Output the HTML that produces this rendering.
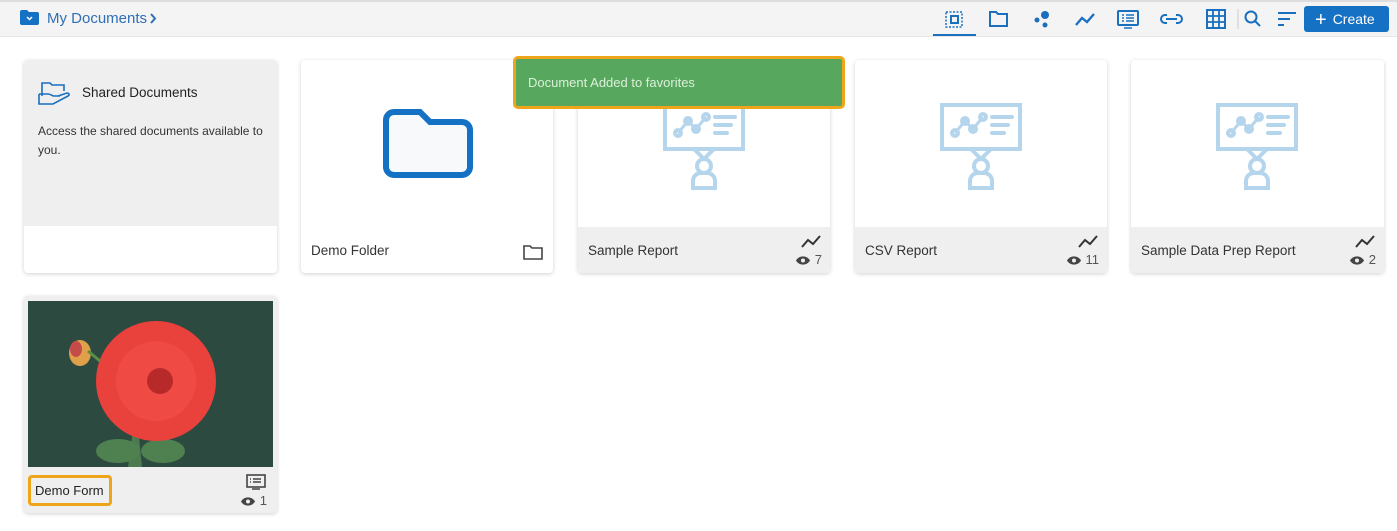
<!DOCTYPE html>
<html><head><meta charset="utf-8"><style>
*{margin:0;padding:0;box-sizing:border-box}
body{width:1397px;height:531px;background:#fff;font-family:"Liberation Sans",sans-serif;position:relative;overflow:hidden;color:#333}
.hdr{position:absolute;left:0;top:0;width:1397px;height:37px;background:#f4f4f4;border-top:2px solid #ddd;border-bottom:1px solid #e6e6e6}
.abs{position:absolute}
.card{position:absolute;background:#fff;border-radius:4px;box-shadow:0 1px 4px rgba(0,0,0,.18);overflow:hidden}
.foot{position:absolute;left:0;right:0;bottom:0;height:46px;background:#efefef}
.title{position:absolute;left:10px;top:16px;font-size:13.5px;color:#333;white-space:nowrap}
.meta{position:absolute;right:8px;top:8px;text-align:right;font-size:13px;color:#555;white-space:nowrap}
.eye{vertical-align:-2px}
</style></head><body>
<div class="hdr"></div>
<svg class="abs" style="left:20px;top:10px" width="19" height="15" viewBox="0 0 19 15"><path d="M0 2a2 2 0 0 1 2-2h5l2 2h8a2 2 0 0 1 2 2v9a2 2 0 0 1-2 2H2a2 2 0 0 1-2-2z" fill="#1571c4"/><path d="M7 7l2.5 2.5L12 7" stroke="#fff" stroke-width="1.5" fill="none"/></svg>
<div class="abs" style="left:47px;top:10px;font-size:15px;color:#2e6fb7">My Documents</div>
<svg class="abs" style="left:149px;top:13px" width="8" height="11"><path d="M2 1l4 4.5L2 10" stroke="#2e6fb7" stroke-width="2" fill="none"/></svg>
<svg class="abs" style="left:933px;top:0" width="380" height="37" viewBox="933 0 380 37" fill="none" stroke="#1a6fbf" stroke-width="2">
<rect x="946" y="12" width="16" height="15" stroke-dasharray="2 1.5" stroke-width="1.5"/><rect x="951" y="16" width="7" height="7" stroke-width="2"/>
<line x1="933" y1="35" x2="976" y2="35" stroke="#1a6fbf" stroke-width="2"/>
<path d="M990 12h6l2 2h9v12h-17z"/>
<circle cx="1045" cy="15" r="4" fill="#1a6fbf" stroke="none"/><circle cx="1037" cy="20" r="2.5" fill="#1a6fbf" stroke="none"/><circle cx="1045" cy="25" r="2.5" fill="#1a6fbf" stroke="none"/>
<path d="M1076 25l6-7 5 4 7-8" stroke-width="2.3"/>
<rect x="1118" y="11" width="20" height="14" rx="1"/><path d="M1122 15h2M1126 15h8M1122 18h2M1126 18h8M1122 21h2M1126 21h8M1124 28h8" stroke-width="1.6"/>
<path d="M1167 15h-2a4 4 0 0 0 0 8h2M1176 15h2a4 4 0 0 1 0 8h-2M1166 19h11"/>
<rect x="1207" y="10" width="18" height="18" stroke-width="2"/><path d="M1213 10v18M1219 10v18M1207 16h18M1207 22h18" stroke-width="1.8"/>
<line x1="1238" y1="9" x2="1238" y2="29" stroke="#ccc" stroke-width="1"/>
<circle cx="1251" cy="17" r="5.5"/><path d="M1255 21l5 5"/>
<path d="M1278 13h18M1278 19h12M1278 25h6"/>
</svg>
<div class="abs" style="left:1304px;top:6px;width:85px;height:26px;background:#1571c4;border-radius:3px;color:#fff;font-size:14px;line-height:26px;padding-left:11px"><span style="font-size:20px;vertical-align:-2px;margin-right:6px">+</span>Create</div>

<div class="card" style="left:24px;top:60px;width:253px;height:213px">
<div style="position:absolute;left:0;top:0;right:0;height:166px;background:#efefef"></div>
<svg class="abs" style="left:14px;top:20px" width="36" height="26" viewBox="0 0 36 26" fill="none" stroke="#1a6fbf" stroke-width="1.6"><path d="M4 16V3h8l2 2h12v6"/><path d="M1 14h9c3 0 4 2 6 2h6M1 14v10h14l15-8c2-1 1-3-1-3l-9 3"/></svg>
<div class="abs" style="left:58px;top:25px;font-size:13.5px;color:#222">Shared Documents</div>
<div class="abs" style="left:14px;top:62px;font-size:12px;line-height:19px;color:#333;width:230px">Access the shared documents available to you.</div>
</div>
<div class="card" style="left:301px;top:60px;width:252px;height:213px">
<svg class="abs" style="left:81px;top:48px" width="92" height="71" viewBox="0 0 92 71"><path d="M4 12a8 8 0 0 1 8-8h26l10 10h32a8 8 0 0 1 8 8v37a8 8 0 0 1-8 8H12a8 8 0 0 1-8-8z" fill="#f7f9fb" stroke="#1571c4" stroke-width="6"/></svg>
<div class="title" style="top:183px">Demo Folder</div>
<svg class="abs" style="left:222px;top:184px" width="20" height="16"><path d="M1 2h6l2 2h10v11H1z" fill="none" stroke="#444" stroke-width="1.6"/></svg>
</div>

<div class="card" style="left:578px;top:60px;width:252px;height:213px"><svg class="abs" style="left:85px;top:43px" width="84" height="88" viewBox="0 0 84 88" fill="none" stroke="#b5d5ed" stroke-width="4"><rect x="2" y="2" width="78" height="44"/><path d="M31 46l10 10M51 46l-10 10"/><circle cx="41" cy="63" r="7"/><path d="M30 85V78a8 8 0 0 1 8-8h6a8 8 0 0 1 8 8v7z"/><path d="M15 30l10-12 8 8 10-12" stroke-width="3"/><circle cx="15" cy="30" r="3"/><circle cx="25" cy="18" r="3"/><circle cx="33" cy="26" r="3"/><circle cx="43" cy="14" r="3"/><path d="M52 14h20M52 22h16M52 30h12" stroke-linecap="round"/></svg>
<div class="foot"><div class="title">Sample Report</div><div class="meta"><svg width="22" height="14"><path d="M2 12l6-7 5 4 7-8" stroke="#333" stroke-width="2" fill="none"/></svg><br><svg class="eye" width="16" height="11"><path d="M1 5.5C4 0 12 0 15 5.5 12 11 4 11 1 5.5z" fill="#444"/><circle cx="8" cy="5.5" r="2" fill="#efefef"/></svg> 7</div></div></div>
<div class="card" style="left:855px;top:60px;width:252px;height:213px"><svg class="abs" style="left:85px;top:43px" width="84" height="88" viewBox="0 0 84 88" fill="none" stroke="#b5d5ed" stroke-width="4"><rect x="2" y="2" width="78" height="44"/><path d="M31 46l10 10M51 46l-10 10"/><circle cx="41" cy="63" r="7"/><path d="M30 85V78a8 8 0 0 1 8-8h6a8 8 0 0 1 8 8v7z"/><path d="M15 30l10-12 8 8 10-12" stroke-width="3"/><circle cx="15" cy="30" r="3"/><circle cx="25" cy="18" r="3"/><circle cx="33" cy="26" r="3"/><circle cx="43" cy="14" r="3"/><path d="M52 14h20M52 22h16M52 30h12" stroke-linecap="round"/></svg>
<div class="foot"><div class="title">CSV Report</div><div class="meta"><svg width="22" height="14"><path d="M2 12l6-7 5 4 7-8" stroke="#333" stroke-width="2" fill="none"/></svg><br><svg class="eye" width="16" height="11"><path d="M1 5.5C4 0 12 0 15 5.5 12 11 4 11 1 5.5z" fill="#444"/><circle cx="8" cy="5.5" r="2" fill="#efefef"/></svg> 11</div></div></div>
<div class="card" style="left:1131px;top:60px;width:253px;height:213px"><svg class="abs" style="left:85px;top:43px" width="84" height="88" viewBox="0 0 84 88" fill="none" stroke="#b5d5ed" stroke-width="4"><rect x="2" y="2" width="78" height="44"/><path d="M31 46l10 10M51 46l-10 10"/><circle cx="41" cy="63" r="7"/><path d="M30 85V78a8 8 0 0 1 8-8h6a8 8 0 0 1 8 8v7z"/><path d="M15 30l10-12 8 8 10-12" stroke-width="3"/><circle cx="15" cy="30" r="3"/><circle cx="25" cy="18" r="3"/><circle cx="33" cy="26" r="3"/><circle cx="43" cy="14" r="3"/><path d="M52 14h20M52 22h16M52 30h12" stroke-linecap="round"/></svg>
<div class="foot"><div class="title">Sample Data Prep Report</div><div class="meta"><svg width="22" height="14"><path d="M2 12l6-7 5 4 7-8" stroke="#333" stroke-width="2" fill="none"/></svg><br><svg class="eye" width="16" height="11"><path d="M1 5.5C4 0 12 0 15 5.5 12 11 4 11 1 5.5z" fill="#444"/><circle cx="8" cy="5.5" r="2" fill="#efefef"/></svg> 2</div></div></div>

<div class="abs" style="left:513px;top:56px;width:332px;height:53px;border:3px solid #eea51a;border-radius:5px;background:#57a85e;color:#dcefd9;font-size:13px;line-height:47px;padding-left:12px">Document Added to favorites</div>

<div class="card" style="left:24px;top:296px;width:253px;height:217px;background:#efefef">
<svg class="abs" style="left:4px;top:5px" width="245" height="166" viewBox="0 0 245 166"><rect width="245" height="166" fill="#2c4a40"/>
<path d="M100 166l8-60 6 60z" fill="#4d7a4e"/><ellipse cx="90" cy="150" rx="22" ry="12" fill="#4f8050"/><ellipse cx="135" cy="150" rx="22" ry="12" fill="#4f8050"/>
<circle cx="128" cy="80" r="60" fill="#e9413b"/><circle cx="128" cy="80" r="40" fill="#ef4b44"/><circle cx="132" cy="80" r="13" fill="#b82a2a"/>
<ellipse cx="52" cy="52" rx="11" ry="13" fill="#e0a04a"/><ellipse cx="48" cy="48" rx="6" ry="8" fill="#c54b49"/><path d="M60 50l12 10" stroke="#5b8e47" stroke-width="3"/></svg>
<div class="abs" style="left:4px;top:179px;width:84px;height:31px;border:3px solid #eea51a;border-radius:4px;font-size:13px;color:#222;line-height:25px;padding-left:4px;white-space:nowrap">Demo Form</div>
<svg class="abs" style="left:222px;top:178px" width="20" height="17" fill="none" stroke="#444" stroke-width="1.6"><rect x="1" y="1" width="18" height="12"/><path d="M4 5h1M7 5h8M4 8h1M7 8h8M6 15h8"/></svg>
<div class="abs" style="right:10px;top:197px;font-size:13px;color:#555;white-space:nowrap"><svg class="eye" width="16" height="11"><path d="M1 5.5C4 0 12 0 15 5.5 12 11 4 11 1 5.5z" fill="#444"/><circle cx="8" cy="5.5" r="2" fill="#efefef"/></svg> 1</div>
</div>
</body></html>
